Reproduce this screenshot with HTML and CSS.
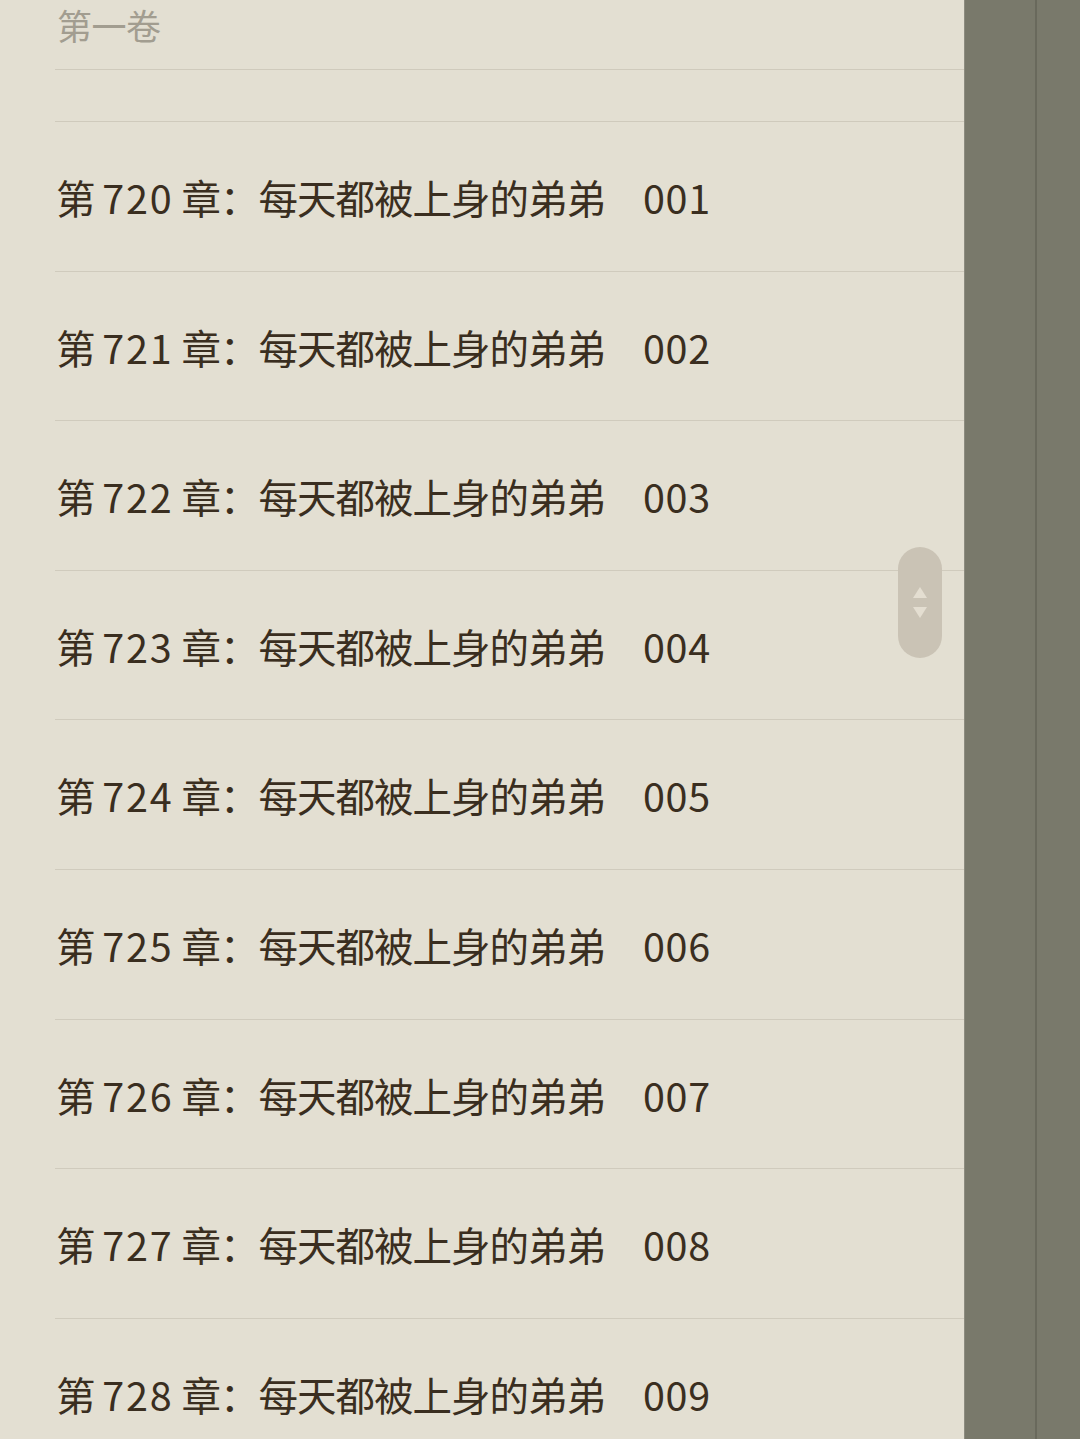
FILE: index.html
```html
<!DOCTYPE html>
<html>
<head>
  <meta charset="UTF-8">
  <title>目录</title>
  <link rel="stylesheet" href="styles.css">
</head>
<body>
  <div class="reader">
    <div class="catalog">
      <div class="volume">第一卷</div>
      <div class="volume-gap"></div>

      <div class="chapter">第 <span class="idx">720</span> 章：每天都被上身的弟弟<span class="num">001</span></div>
      <div class="chapter">第 <span class="idx">721</span> 章：每天都被上身的弟弟<span class="num">002</span></div>
      <div class="chapter">第 <span class="idx">722</span> 章：每天都被上身的弟弟<span class="num">003</span></div>
      <div class="chapter">第 <span class="idx">723</span> 章：每天都被上身的弟弟<span class="num">004</span></div>
      <div class="chapter">第 <span class="idx">724</span> 章：每天都被上身的弟弟<span class="num">005</span></div>
      <div class="chapter">第 <span class="idx">725</span> 章：每天都被上身的弟弟<span class="num">006</span></div>
      <div class="chapter">第 <span class="idx">726</span> 章：每天都被上身的弟弟<span class="num">007</span></div>
      <div class="chapter">第 <span class="idx">727</span> 章：每天都被上身的弟弟<span class="num">008</span></div>
      <div class="chapter">第 <span class="idx">728</span> 章：每天都被上身的弟弟<span class="num">009</span></div>

      <!-- 快速滚动滑块 -->
      <div class="scroll-thumb">
        <svg width="14" height="32" viewBox="0 0 14 32">
          <path d="M7 0 L14 11 L0 11 Z" fill="#e4ded1"/>
          <path d="M0 20 L14 20 L7 31 Z" fill="#e4ded1"/>
        </svg>
      </div>
    </div>
    <div class="side">
      <div class="side-line"></div>
    </div>
  </div>
</body>
</html>
```

FILE: styles.css
```css
html, body {
  margin: 0;
  padding: 0;
  height: 100%;
  overflow: hidden;
}
body {
  font-family: "Noto Sans CJK SC", "Noto Sans", sans-serif;
  background: #79796b;
}
.reader {
  display: flex;
  height: 1439px;
}
.catalog {
  position: relative;
  width: 909px;
  padding-left: 55px;
  background: #e3dfd2;
  border-right: 1px solid #8d8c80;
}
.volume {
  height: 70px;
  padding-left: 2px;
  line-height: 50px;
  font-size: 35px;
  letter-spacing: -0.5px;
  color: #a29d90;
  border-bottom: 1px solid #cfcabc;
  box-sizing: border-box;
}
.volume-gap {
  height: 52px;
  border-bottom: 1px solid #cfcabc;
  box-sizing: border-box;
}
.chapter {
  height: 149.6px;
  line-height: 149px;
  padding-left: 1px;
  font-size: 39.5px;
  letter-spacing: -1px;
  color: #3a2e20;
  white-space: nowrap;
  border-bottom: 1px solid #d0cbbd;
  box-sizing: border-box;
}
.idx {
  letter-spacing: 1.8px;
}
.num {
  margin-left: 38px;
  letter-spacing: 0.8px;
}
.scroll-thumb {
  position: absolute;
  left: 898px;
  top: 547px;
  width: 44px;
  height: 111px;
  border-radius: 22px;
  background: #cac3b5;
  display: flex;
  align-items: center;
  justify-content: center;
}
.side {
  flex: 1;
  display: flex;
}
.side-line {
  margin-left: 70px;
  width: 2px;
  background: #69695c;
}
```
